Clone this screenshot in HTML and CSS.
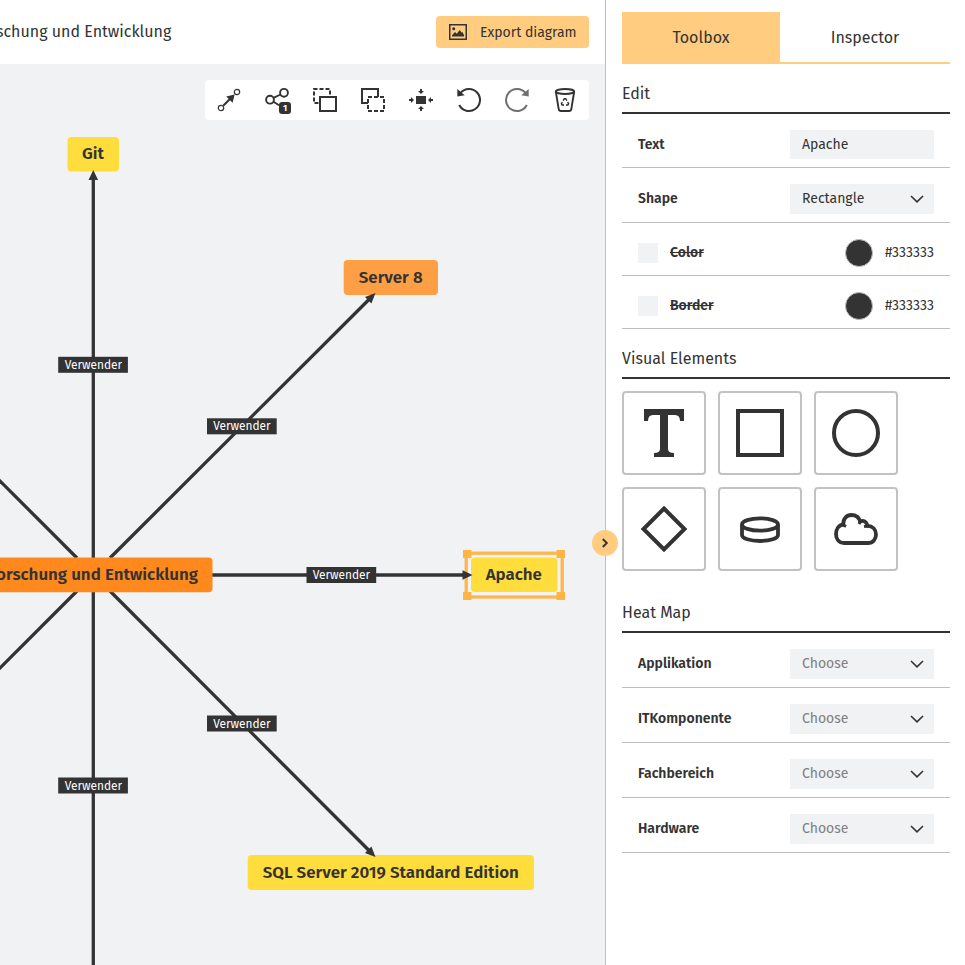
FILE: index.html
```
<!DOCTYPE html>
<html lang="de">
<head>
<meta charset="utf-8">
<title>Diagram</title>
<link rel="stylesheet" href="styles.css">
</head>
<body>
<div class="app">
  <main class="main">
    <header class="header">
      <h1 class="title">schung und Entwicklung</h1>
      <button class="export">
        <svg width="18" height="16" viewBox="0 0 18 16"><rect x="0.75" y="0.75" width="16.5" height="14.5" fill="none" stroke="#333" stroke-width="1.5"/><circle cx="4.7" cy="4.8" r="1.5" fill="#333"/><path d="M3 12.5V11.3L6 8L7.8 9.7L10.7 6L12.6 8.6L13.4 7.9L15 11V12.5Z" fill="#333"/></svg>
        <span>Export diagram</span>
      </button>
    </header>
    <div class="canvas">
      <svg class="diagram" width="605" height="901" viewBox="0 64 605 901">
        <g class="edges">
          <path d="M93.300 558V175"/>
          <path d="M93.300 591V965"/>
          <path d="M77 558L-2 479"/>
          <path d="M77 591L-2 670"/>
          <path d="M110 558L370 298.500"/>
          <path d="M212 575H467"/>
          <path d="M110 591L370 851.500"/>
        </g>
        <g class="nodes">
          <rect class="yellow" x="67.500" y="137" width="51.500" height="34.500" rx="4"/>
          <rect class="amber" x="343.700" y="260" width="94.300" height="35" rx="4"/>
          <rect class="orange" x="-26" y="557.500" width="238.500" height="34.800" rx="4"/>
          <rect class="yellow" x="247.700" y="855" width="286.300" height="35" rx="4"/>
          <rect class="halo" x="469" y="555.500" width="90" height="39" rx="4"/>
          <rect class="yellow" x="471" y="557.500" width="86.500" height="34.500" rx="4"/>
          <text x="82" y="159">Git</text>
          <text x="358.800" y="283">Server 8</text>
          <text x="198" y="580" text-anchor="end">Forschung und Entwicklung</text>
          <text x="485.700" y="580">Apache</text>
          <text x="262.700" y="878">SQL Server 2019 Standard Edition</text>
        </g>
        <g class="selection">
          <rect class="frame" x="466.200" y="553.200" width="96" height="43.800"/>
          <rect class="grip" x="463" y="550" width="8.500" height="8"/>
          <rect class="grip" x="556.500" y="550" width="8.500" height="8"/>
          <rect class="grip" x="463" y="592" width="8.500" height="8"/>
          <rect class="grip" x="556.500" y="592" width="8.500" height="8"/>
        </g>
        <g class="heads">
          <path d="M88.500 180L93.300 170L98.100 180Z"/>
          <path d="M375.500 293L371.400 303.400L365 297Z"/>
          <path d="M375.500 857L365 853L371.400 846.600Z"/>
          <path d="M462.500 570.200L472.500 575L462.500 579.800Z"/>
        </g>
        <g class="labels">
          <rect x="58.200" y="356.800" width="69.700" height="16"/>
          <rect x="207" y="418.300" width="69.700" height="16"/>
          <rect x="306.500" y="567" width="69.700" height="16"/>
          <rect x="207" y="715.500" width="69.700" height="16"/>
          <rect x="58.200" y="777.500" width="69.700" height="16"/>
          <text x="93.400" y="369">Verwender</text>
          <text x="241.900" y="430">Verwender</text>
          <text x="341.400" y="579">Verwender</text>
          <text x="241.900" y="728">Verwender</text>
          <text x="93.400" y="790">Verwender</text>
        </g>
      </svg>
      <nav class="toolbar">
        <svg viewBox="0 0 24 24"><g fill="none" stroke="#333" stroke-width="1.200"><circle cx="4" cy="20" r="2.700"/><circle cx="20" cy="4" r="2.700"/></g><path d="M6.200 17.800L14 10" stroke="#333" stroke-width="2"/><path d="M17.600 6.400L15.600 14.800L9.200 8.400Z" fill="#333"/></svg>
        <svg viewBox="0 0 24 24"><g fill="none" stroke="#333" stroke-width="1.900"><circle cx="5" cy="11.700" r="3.900"/><circle cx="19" cy="4.800" r="3.900"/><path d="M8.500 9.900L15.500 6.500M8.500 13.700L14 17.200"/></g><rect x="14" y="14" width="12" height="12" rx="3" fill="#333"/><text class="count" x="20" y="23">1</text></svg>
        <svg viewBox="0 0 24 24"><path d="M5.500 15H1V1H17V8" fill="none" stroke="#333" stroke-width="2" stroke-dasharray="4 2"/><rect x="7" y="9" width="16" height="14" fill="#fff" stroke="#333" stroke-width="2"/></svg>
        <svg viewBox="0 0 24 24"><rect x="1" y="1" width="16" height="14" fill="none" stroke="#333" stroke-width="2"/><rect x="7" y="9" width="16" height="14" fill="#fff"/><rect x="7" y="9" width="16" height="14" fill="none" stroke="#333" stroke-width="2" stroke-dasharray="4 2"/></svg>
        <svg viewBox="0 0 24 24"><g fill="#333"><rect x="7" y="8" width="10" height="8"/><path d="M11 1h2v2h2l-3 3l-3 -3h2z"/><path d="M11 23h2v-2h2l-3 -3l-3 3h2z"/><path d="M0 11v2h2v2l3 -3l-3 -3v2z"/><path d="M24 11v2h-2v2l-3 -3l3 -3v2z"/></g></svg>
        <svg viewBox="0 0 24 24"><path d="M2.200 17A11 11 0 1 0 3.500 5" fill="none" stroke="#333" stroke-width="2"/><path d="M0.300 1L0.300 8.500L7.700 7.200Z" fill="#333"/></svg>
        <svg class="disabled" viewBox="0 0 24 24"><path d="M21.800 17A11 11 0 1 1 20.500 5" fill="none" stroke="#333" stroke-width="2"/><path d="M23.700 1L23.700 8.500L16.300 7.200Z" fill="#333"/></svg>
        <svg viewBox="0 0 24 24"><g fill="none" stroke="#333" stroke-width="1.900"><ellipse cx="12" cy="3.500" rx="9.200" ry="2.500"/><path d="M2.800 3.500L5.700 21.200Q6 23 8 23H16Q18 23 18.300 21.200L21.200 3.500"/></g><path d="M10.200 12.600L11.300 10.700H12.700L13.900 12.600M14.700 14L15.600 15.700L14.900 17H13M11 17H9.100L8.400 15.700L9.300 14" fill="none" stroke="#333" stroke-width="1.500"/></svg>
      </nav>
    </div>
    <button class="collapse"><svg width="8" height="10" viewBox="0 0 8 10"><path d="M1.800 1L5.800 5L1.800 9" fill="none" stroke="#333" stroke-width="1.900"/></svg></button>
  </main>
  <aside class="panel">
    <div class="tabs"><div class="tab active">Toolbox</div><div class="tab">Inspector</div></div>

    <h2 class="heading">Edit</h2>
    <div class="row text-row"><span class="label">Text</span><div class="field input">Apache</div></div>
    <div class="row"><span class="label">Shape</span><div class="field">Rectangle<svg class="chevron" viewBox="0 0 14 8"><path d="M1 1L7 6.800L13 1"/></svg></div></div>
    <div class="row color-row"><i class="check"></i><span class="label off">Color</span><i class="swatch"></i><span class="hex">#333333</span></div>
    <div class="row color-row"><i class="check"></i><span class="label off">Border</span><i class="swatch"></i><span class="hex">#333333</span></div>

    <h2 class="heading">Visual Elements</h2>
    <div class="tiles">
      <div class="tile"><svg viewBox="0 0 48 48"><path fill="#333" d="M4 0H44V12H40Q40 6 35 6H28V40Q28 44 34 44V48H14V44Q20 44 20 40V6H13Q8 6 8 12H4Z"/></svg></div>
      <div class="tile"><svg viewBox="0 0 48 48"><rect x="2" y="2" width="44" height="44"/></svg></div>
      <div class="tile"><svg viewBox="0 0 48 48"><circle cx="24" cy="24" r="22"/></svg></div>
      <div class="tile"><svg viewBox="0 0 48 48"><path d="M24 3.500L44.500 24L24 44.500L3.500 24Z"/></svg></div>
      <div class="tile"><svg viewBox="0 0 48 48"><g stroke-width="3.800"><ellipse cx="24" cy="19.500" rx="18" ry="6.200"/><path d="M6 19.500V30C6 33.500 14 36 24 36S42 33.500 42 30V19.500"/></g></svg></div>
      <div class="tile"><svg viewBox="0 0 48 48"><g stroke-width="3.800"><path d="M12 38H36C41 38 44 34 44 29.500C44 24.500 40.500 21 35.500 20.800C35 16.800 31.500 15 28.300 16.500C27 12.500 23.500 10 19.500 10C14.500 10 10.800 14 11.300 19.500C6.500 20 4 24.500 4 29C4 34 7 38 12 38Z"/><path d="M10.500 19.500L14 21.500M28.800 15.500L27 19M32 21.500L36 20.800" stroke-width="3"/></g></svg></div>
    </div>

    <h2 class="heading">Heat Map</h2>
    <div class="row"><span class="label">Applikation</span><div class="field empty">Choose<svg class="chevron" viewBox="0 0 14 8"><path d="M1 1L7 6.800L13 1"/></svg></div></div>
    <div class="row"><span class="label">ITKomponente</span><div class="field empty">Choose<svg class="chevron" viewBox="0 0 14 8"><path d="M1 1L7 6.800L13 1"/></svg></div></div>
    <div class="row"><span class="label">Fachbereich</span><div class="field empty">Choose<svg class="chevron" viewBox="0 0 14 8"><path d="M1 1L7 6.800L13 1"/></svg></div></div>
    <div class="row"><span class="label">Hardware</span><div class="field empty">Choose<svg class="chevron" viewBox="0 0 14 8"><path d="M1 1L7 6.800L13 1"/></svg></div></div>
  </aside>
</div>
</body>
</html>
```
FILE: styles.css
```
* { box-sizing: border-box; }
body {
  margin: 0;
  overflow: hidden;
  font-family: "Fira Sans", "Noto Sans", sans-serif;
  font-weight: 400;
  color: #333;
  background: #fff;
}
svg { display: block; flex: none; }
button { border: 0; margin: 0; padding: 0; font: inherit; color: inherit; }

.app { display: flex; height: 965px; }
.main {
  position: relative;
  width: 606px;
  flex: none;
  display: flex;
  flex-direction: column;
  border-right: 1px solid #bdbdbd;
}
.header {
  height: 64px;
  flex: none;
  display: flex;
  align-items: center;
  justify-content: space-between;
  padding-right: 16px;
}
.title {
  margin: 0 0 2px -4px;
  font-size: 16px;
  font-weight: 400;
}
.export {
  display: flex;
  align-items: center;
  gap: 13px;
  width: 153px;
  height: 32px;
  padding-left: 13px;
  border-radius: 4px;
  background: #ffcc80;
  font-size: 14px;
  white-space: nowrap;
}

.canvas { position: relative; flex: 1; background: #f1f2f4; overflow: hidden; }
.edges { fill: none; stroke: #333; stroke-width: 3.3px; }
.heads { fill: #333; }
.yellow { fill: #ffdd3c; }
.amber { fill: #ff9f45; }
.orange { fill: #ff891d; }
.halo { fill: #f3f3f1; }
.nodes text { font-size: 16.9px; font-weight: 600; fill: #333; }
.frame { fill: none; stroke: #ffb74d; stroke-width: 3.3px; }
.grip { fill: #ffb445; }
.labels rect { fill: #333; }
.labels text { font-size: 11.9px; font-weight: 400; fill: #fff; text-anchor: middle; }

.toolbar {
  position: absolute;
  top: 16px;
  right: 16px;
  width: 384px;
  height: 40px;
  display: flex;
  align-items: center;
  justify-content: space-around;
  background: #fff;
  border-radius: 4px;
}
.toolbar svg { width: 24px; height: 24px; overflow: visible; }
.toolbar .disabled { opacity: 0.7; }
.count { font-size: 9px; font-weight: 700; fill: #fff; text-anchor: middle; }

.collapse {
  position: absolute;
  right: -13px;
  top: 530px;
  width: 26px;
  height: 26px;
  display: flex;
  align-items: center;
  justify-content: center;
  border-radius: 50%;
  background: #ffcc80;
}

.panel { flex: 1; padding: 12px 15px 0 16px; }
.tabs { display: flex; height: 52px; border-bottom: 2px solid #ffcc80; }
.tab {
  flex: 1;
  display: flex;
  align-items: center;
  justify-content: center;
  font-size: 16px;
}
.active { flex: 0 0 158px; background: #ffcc80; }
.heading {
  height: 50px;
  margin: 0;
  padding-top: 11px;
  border-bottom: 2px solid #333;
  font-size: 16px;
  font-weight: 400;
  line-height: 37px;
}
.row {
  display: flex;
  align-items: center;
  height: 55px;
  padding: 7px 16px 0;
  border-bottom: 1px solid #bdbdbd;
  font-size: 14px;
}
.text-row { height: 54px; }
.color-row { height: 53px; }
.label { font-weight: 600; }
.off { text-decoration: line-through; }
.field {
  display: flex;
  align-items: center;
  justify-content: space-between;
  width: 144px;
  height: 30px;
  margin-left: auto;
  padding: 0 10px 0 12px;
  background: #f1f2f4;
}
.input { height: 29px; }
.empty { color: #808080; }
.chevron { width: 14px; height: 8px; }
.chevron path { fill: none; stroke: #333; stroke-width: 1.6px; }
.check { width: 20px; height: 20px; margin-right: 12px; background: #f1f2f4; }
.swatch {
  width: 28px;
  height: 28px;
  margin-left: auto;
  margin-right: 12px;
  border: 1px solid #bdbdbd;
  border-radius: 50%;
  background: #333;
}

.tiles {
  display: grid;
  grid-template-columns: repeat(3, 84px);
  gap: 12px;
  padding: 12px 0;
}
.tile {
  height: 84px;
  display: flex;
  align-items: center;
  justify-content: center;
  border: 2px solid #c2c2c2;
  border-radius: 4px;
}
.tile svg { width: 48px; height: 48px; fill: none; stroke: #333; stroke-width: 4px; }
.tile:first-child svg { stroke: none; }
```
